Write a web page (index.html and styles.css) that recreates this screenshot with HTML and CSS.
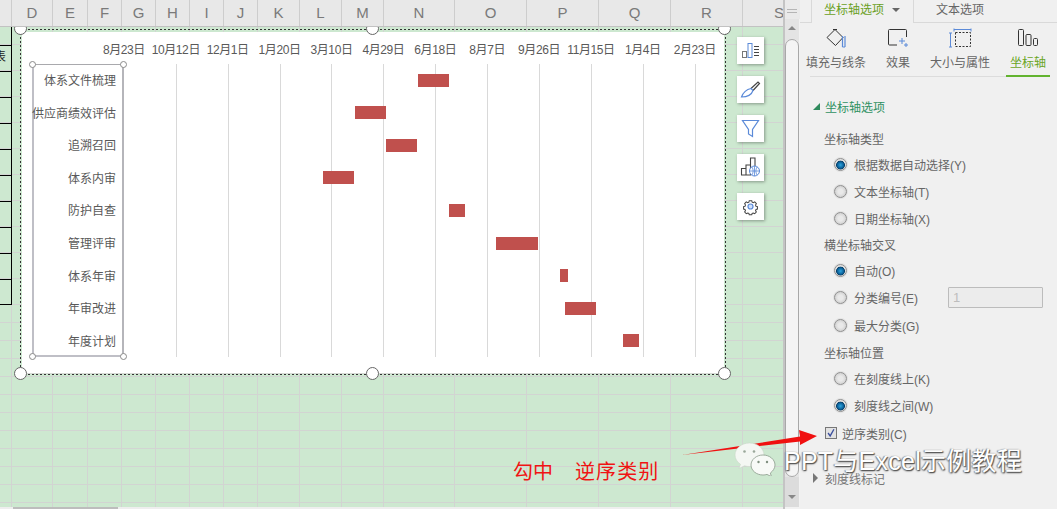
FILE: index.html
```html
<!DOCTYPE html>
<html lang="zh">
<head>
<meta charset="utf-8">
<title>甘特图 坐标轴选项</title>
<link rel="stylesheet" href="styles.css">
</head>
<body>
<div class="app">
  <section class="sheet">
    <div class="col-head cols">
      <span></span><span>D</span><span>E</span><span>F</span><span>G</span><span>H</span><span>I</span><span>J</span><span>K</span><span>L</span><span>M</span><span>N</span><span>O</span><span>P</span><span>Q</span><span>R</span><span class="col-s">S</span>
    </div>
    <div class="cells">
      <div class="v-lines cols">
        <i></i><i></i><i></i><i></i><i></i><i></i><i></i><i></i><i></i><i></i><i></i><i></i><i></i><i></i><i></i><i></i><i></i>
      </div>
      <div class="h-lines">
        <i></i><i class="tall"></i><i class="tall"></i><i class="tall"></i><i class="tall"></i><i class="tall"></i><i class="tall"></i><i class="tall"></i><i class="tall"></i><i class="tall"></i><i class="tall"></i>
        <i></i><i></i><i></i><i></i><i></i><i></i><i></i><i></i><i></i><i></i><i></i>
      </div>
      <div class="table-edge">
        <b class="first">表</b><b></b><b></b><b></b><b></b><b></b><b></b><b></b><b></b><b></b>
      </div>
    </div>
    <div class="hscroll"><i></i></div>

    <div class="chart">
      <div class="chart-body">
        <div class="x-axis">
          <span>8月23日</span><span>10月12日</span><span>12月1日</span><span>1月20日</span><span>3月10日</span><span>4月29日</span><span>6月18日</span><span>8月7日</span><span>9月26日</span><span>11月15日</span><span>1月4日</span><span>2月23日</span>
        </div>
        <div class="plot">
          <div class="cat-box">
            <span>体系文件梳理</span><span>供应商绩效评估</span><span>追溯召回</span><span>体系内审</span><span>防护自查</span><span>管理评审</span><span>体系年审</span><span>年审改进</span><span>年度计划</span>
            <i class="dot d-tl"></i><i class="dot d-tr"></i><i class="dot d-bl"></i><i class="dot d-br"></i>
          </div>
          <div class="bars">
            <div><i style="margin-left:294px;width:31px"></i></div>
            <div><i style="margin-left:231px;width:31px"></i></div>
            <div><i style="margin-left:262px;width:31px"></i></div>
            <div><i style="margin-left:199px;width:31px"></i></div>
            <div><i style="margin-left:325px;width:16px"></i></div>
            <div><i style="margin-left:372px;width:42px"></i></div>
            <div><i style="margin-left:436px;width:8px"></i></div>
            <div><i style="margin-left:441px;width:31px"></i></div>
            <div><i style="margin-left:499px;width:16px"></i></div>
          </div>
        </div>
      </div>
      <i class="handle h-tl"></i><i class="handle h-tc"></i><i class="handle h-tr"></i>
      <i class="handle h-bl"></i><i class="handle h-bc"></i><i class="handle h-br"></i>
    </div>

    <div class="tools">
      <button class="tool"><svg viewBox="0 0 27 27"><rect x="5.500" y="14.500" width="4" height="6" fill="none" stroke="#777"/><rect x="11" y="6.500" width="4" height="14" fill="none" stroke="#5b8ad8"/><path d="M17 9.500h5M17 12.500h5M17 15.500h5M17 18.500h5" stroke="#444"/></svg></button>
      <button class="tool"><svg viewBox="0 0 27 27"><path d="M14 12.500l7-6.500 1.500 1.500-6.500 7" fill="none" stroke="#444" stroke-width="1.200"/><path d="M14 12.500l2 2C14.500 19 9.500 21 4.500 21 6 17 9 13.500 14 12.500z" fill="none" stroke="#5b8ad8" stroke-width="1.200"/></svg></button>
      <button class="tool"><svg viewBox="0 0 27 27"><path d="M5.500 5.500h16l-6 9v7l-4-2.500v-4.500z" fill="none" stroke="#5b8ad8" stroke-width="1.200"/></svg></button>
      <button class="tool"><svg viewBox="0 0 27 27"><path d="M4.500 21v-6.500h4.500V21M9 21v-10h4.500V21M13.500 14V4h4.500v8M4 21h10" fill="none" stroke="#444" stroke-width="1.100"/><circle cx="17.500" cy="17" r="5" fill="#fff" stroke="#5b8ad8"/><path d="M12.500 17h10M17.500 12v10M15 13c1.500 2.500 1.500 5.500 0 8M20 13c-1.500 2.500-1.500 5.500 0 8" fill="none" stroke="#5b8ad8" stroke-width=".8"/></svg></button>
      <button class="tool"><svg viewBox="0 0 27 27"><path d="M11.500 5h4l.6 2.500 1.800.8 2.300-1.300 2.600 2.800-1.300 2.200.7 1.900 2.300.6v3.800l-2.300.7-.7 1.800 1.300 2.200-2.600 2.700-2.300-1.200-1.800.7-.6 2.300h-4l-.6-2.300-1.800-.7-2.300 1.200-2.600-2.700 1.300-2.200-.7-1.800-2.300-.7v-3.800l2.300-.6.700-1.900-1.300-2.200 2.600-2.800 2.300 1.300 1.800-.8z" transform="translate(5 4.500) scale(.63)" fill="none" stroke="#444" stroke-width="1.600"/><circle cx="13.500" cy="13.500" r="2.500" fill="#cfe0fa" stroke="#5b8ad8" stroke-width="1.200"/></svg></button>
    </div>

    <p class="note">勾中<span class="note-gap">逆序类别</span></p>
  </section>

  <div class="vscroll">
    <div class="grip"></div>
    <div class="track">
      <i class="arrow-up"></i>
      <div class="thumb"></div>
    </div>
    <div class="track-end"><i class="arrow-down"></i></div>
  </div>

  <aside class="panel">
    <div class="tabs">
      <div class="tab active">坐标轴选项<i class="caret"></i></div>
      <div class="tab">文本选项</div>
    </div>
    <div class="sub-tabs">
      <div class="sub w60">
        <svg viewBox="0 0 24 20"><path d="M11 1.500L19 9.500 11.500 17.500 3 9.500z" fill="none" stroke="#333"/><path d="M9 1.500h4" stroke="#333"/><path d="M18.500 8v11M21 8v11" stroke="#5b8ad8" stroke-width="1.200"/><path d="M18.500 19H21" stroke="#5b8ad8"/></svg>
        <span>填充与线条</span>
      </div>
      <div class="sub w24">
        <svg viewBox="0 0 24 20"><path d="M20.500 9V2.500a1 1 0 0 0-1-1H3.500a1 1 0 0 0-1 1V16a1 1 0 0 0 1 1H11" fill="none" stroke="#333"/><path d="M16 10v6M13 13h6M20 15v4M18 17h4" stroke="#5b8ad8"/></svg>
        <span>效果</span>
      </div>
      <div class="sub w60">
        <svg viewBox="0 0 24 20"><rect x="7.500" y="4.500" width="15" height="14" fill="none" stroke="#333" stroke-dasharray="2 1.500"/><path d="M6 1.500h17M6 .5v3M23 .5v3M2.500 5v14M1 5h3M1 19h3" fill="none" stroke="#5b8ad8"/></svg>
        <span>大小与属性</span>
      </div>
      <div class="sub on">
        <svg viewBox="0 0 24 20"><rect x="2.500" y="1.500" width="5" height="16" rx="1" fill="none" stroke="#333"/><rect x="10" y="6.500" width="5" height="11" rx="1" fill="none" stroke="#333"/><rect x="17.500" y="10.500" width="4" height="7" rx="1" fill="none" stroke="#333"/></svg>
        <span>坐标轴</span>
      </div>
    </div>

    <h2 class="section open"><i class="tri-open"></i>坐标轴选项</h2>

    <div class="options">
      <div class="head">坐标轴类型</div>
      <label class="opt"><i class="radio checked"></i>根据数据自动选择(Y)</label>
      <label class="opt"><i class="radio"></i>文本坐标轴(T)</label>
      <label class="opt"><i class="radio"></i>日期坐标轴(X)</label>
      <div class="head">横坐标轴交叉</div>
      <label class="opt"><i class="radio checked"></i>自动(O)</label>
      <label class="opt"><i class="radio"></i>分类编号(E)<span class="num">1</span></label>
      <label class="opt"><i class="radio"></i>最大分类(G)</label>
      <div class="head">坐标轴位置</div>
      <label class="opt"><i class="radio"></i>在刻度线上(K)</label>
      <label class="opt"><i class="radio checked"></i>刻度线之间(W)</label>
      <label class="check"><i class="box"><svg viewBox="0 0 12 12"><path d="M2.500 6l2.500 3.500L9.500 1.500" fill="none" stroke="#3b4f9e" stroke-width="1.600"/></svg></i>逆序类别(C)</label>
    </div>

    <h2 class="section closed"><i class="tri-closed"></i>刻度线标记</h2>
  </aside>

  <svg class="red-arrow" viewBox="0 0 140 30"><path d="M0 27L118 8.500 117 2 135 8 118 17 118 13.500z" fill="#f01010"/></svg>

  <svg class="wechat" viewBox="0 0 42 34"><path d="M15.500 1C7.500 1 1 6.500 1 13c0 3.800 2.200 7 5.500 9.300L5 26.500l5.500-2.700c1.600.5 3.300.7 5 .7 8 0 14.500-5 14.500-11.500S23.500 1 15.500 1z" fill="#f4f7f3" stroke="#c9d6c8" stroke-width=".6"/><path d="M29 13c-6.500 0-12 4.400-12 10s5.500 10 12 10c1.400 0 2.700-.2 4-.6l4.500 2.300-1.200-3.600C39 29 41 26.200 41 23c0-5.600-5.500-10-12-10z" fill="#f8faf7" stroke="#8a9a8a" stroke-width=".8"/><circle cx="10.500" cy="9.500" r="1.300" fill="#9aa89a"/><circle cx="20" cy="9.500" r="1.300" fill="#9aa89a"/><circle cx="24.500" cy="20" r="1.200" fill="#7f8f7f"/><circle cx="33" cy="20" r="1.200" fill="#7f8f7f"/></svg>
  <div class="watermark">PPT与Excel示例教程</div>
</div>
</body>
</html>
```

FILE: styles.css
```css
* { box-sizing: border-box; }
html, body { margin: 0; padding: 0; }
body {
  font-family: "Liberation Sans", "Noto Sans CJK SC", sans-serif;
  font-size: 12px;
  color: #666;
  overflow: hidden;
}
i { display: block; }

.app {
  position: relative;
  display: flex;
  width: 1057px;
  height: 509px;
  overflow: hidden;
  background: #f0f0f0;
}

/* ---------- spreadsheet ---------- */
.sheet {
  position: relative;
  width: 785px;
  height: 509px;
  display: flex;
  flex-direction: column;
  border-right: 2px solid #c4c4c4;
  overflow: hidden;
}
.cols {
  display: grid;
  grid-template-columns: 12px 41px 35px 34px 34px 34px 34px 34px 42px 42px 42px 71px 72px 72px 72px 72px 41px;
}
.col-head {
  position: relative;
  z-index: 3;
  flex: none;
  height: 27px;
  background: #e8e8e8;
  border-bottom: 1px solid #c2c2c2;
}
.col-head span {
  display: flex;
  align-items: center;
  justify-content: center;
  border-right: 1px solid #cdcdcd;
  padding-bottom: 1px;
  font-size: 15px;
  color: #7a7a7a;
}
.col-head .col-s {
  justify-content: flex-end;
  border-right: 0;
  overflow: hidden;
  white-space: nowrap;
  padding-right: 0;
}
.cells {
  flex: 1;
  display: grid;
  background: #cde8d0;
  overflow: hidden;
}
.cells > * { grid-area: 1 / 1; }
.v-lines i { border-right: 1px solid #d2d4d2; }
.h-lines { display: flex; flex-direction: column; }
.h-lines i { flex: none; height: 18px; border-bottom: 1px solid #d2d4d2; }
.h-lines .tall { height: 26px; }
.table-edge {
  width: 12px;
  height: 278px;
  padding-top: 18px;
  border-right: 1px solid #000;
  border-bottom: 1px solid #000;
  align-self: start;
}
.table-edge b {
  display: block;
  height: 26px;
  border-top: 1px solid #000;
  overflow: hidden;
  font-weight: 400;
  color: #222;
  line-height: 23px;
  text-indent: -6px;
}
.hscroll { flex: none; height: 2px; background: #eee; }
.hscroll i { width: 105px; height: 2px; margin-left: 13px; background: #bdbdbd; }

/* ---------- chart ---------- */
.chart {
  position: absolute;
  left: 20px;
  top: 29px;
  width: 706px;
  height: 346px;
  padding: 3px 2px 2px 2px;
  background:
    repeating-linear-gradient(90deg, #333 0 2px, transparent 2px 4px) left top / 100% 1px no-repeat,
    repeating-linear-gradient(90deg, #333 0 2px, transparent 2px 4px) left bottom / 100% 1px no-repeat,
    repeating-linear-gradient(0deg, #333 0 2px, transparent 2px 4px) left top / 1px 100% no-repeat,
    repeating-linear-gradient(0deg, #333 0 2px, transparent 2px 4px) right top / 1px 100% no-repeat;
}
.chart-body {
  height: 341px;
  background: #fff;
  color: #595959;
  box-shadow: 0 1px 0 #d5d8d4;
}
.x-axis {
  display: flex;
  height: 32px;
  padding-left: 76px;
  align-items: center;
}
.x-axis span {
  flex: none;
  width: 51.9px;
  text-align: center;
  white-space: nowrap;
  letter-spacing: -.4px;
}
.plot {
  display: flex;
  height: 293px;
  padding-left: 10px;
}
.cat-box {
  position: relative;
  flex: none;
  width: 92px;
  height: 293px;
  display: flex;
  flex-direction: column;
  align-items: flex-end;
  border: 2px solid #bfbfc6;
  border-top: 1px solid #a9a9ad;
  border-right-color: #b5b5ba;
  padding-right: 6px;
}
.cat-box span {
  flex: none;
  height: 32.6px;
  line-height: 32px;
  white-space: nowrap;
}
.dot {
  position: absolute;
  width: 7px;
  height: 7px;
  border: 1px solid #8a8a8a;
  border-radius: 50%;
  background: #fff;
}
.d-tl { left: -5px; top: -4px; }
.d-tr { right: -5px; top: -4px; }
.d-bl { left: -5px; bottom: -5px; }
.d-br { right: -5px; bottom: -5px; }
.bars {
  flex: 1;
  display: grid;
  grid-template-rows: repeat(9, 1fr);
  background:
    linear-gradient(#fff, #fff) left top / 1px 100% no-repeat,
    repeating-linear-gradient(90deg, #d9d9d9 0 1px, transparent 1px 51.87px);
}
.bars div { display: flex; align-items: center; }
.bars i { height: 13px; background: #c0504d; }

.handle {
  position: absolute;
  width: 13px;
  height: 13px;
  border: 1px solid #666;
  border-radius: 50%;
  background: #fff;
}
.h-tl { left: -6px; top: -7px; }
.h-tc { left: 346px; top: -7px; }
.h-tr { right: -5px; top: -7px; }
.h-bl { left: -6px; bottom: -5px; }
.h-bc { left: 346px; bottom: -5px; }
.h-br { right: -5px; bottom: -5px; }

/* ---------- floating chart tools ---------- */
.tools {
  position: absolute;
  left: 737px;
  top: 37px;
  display: flex;
  flex-direction: column;
  gap: 12px;
}
.tool {
  display: block;
  width: 27px;
  height: 27px;
  padding: 0;
  border: 0;
  background: #fff;
  box-shadow: 1px 1px 3px rgba(0, 0, 0, .35);
}
.tool svg { display: block; width: 27px; height: 27px; }

.note {
  position: absolute;
  left: 513px;
  top: 458px;
  margin: 0;
  font-size: 20px;
  line-height: 28px;
  color: #f01414;
  white-space: nowrap;
}
.note-gap { margin-left: 22px; letter-spacing: 1.100px; }

/* ---------- vertical scrollbar ---------- */
.vscroll {
  flex: none;
  width: 15px;
  height: 509px;
  display: flex;
  flex-direction: column;
  background: #f2f2f2;
}
.grip {
  flex: none;
  height: 19px;
  position: relative;
  background:
    linear-gradient(#b5b5b5, #b5b5b5) 2px 9px / 10px 1px no-repeat,
    linear-gradient(#b5b5b5, #b5b5b5) 2px 12px / 10px 1px no-repeat,
    #eaeaea;
}
.track {
  flex: none;
  height: 458px;
  width: 14px;
  background: #e4e4e4;
}
.arrow-up {
  width: 0;
  height: 0;
  margin: 7px auto 0;
  border-left: 4px solid transparent;
  border-right: 4px solid transparent;
  border-bottom: 4px solid #888;
}
.thumb {
  width: 14px;
  height: 438px;
  margin-top: 9px;
  background: #f4f4f4;
  border: 1px solid #a8a8a8;
  border-radius: 7px;
}
.track-end {
  flex: none;
  height: 30px;
  width: 14px;
  background: #dcdcdc;
  padding-top: 18px;
}
.arrow-down {
  width: 0;
  height: 0;
  margin: 0 auto;
  border-left: 4px solid transparent;
  border-right: 4px solid transparent;
  border-top: 4px solid #888;
}

/* ---------- task pane ---------- */
.panel {
  flex: none;
  width: 257px;
  height: 509px;
  background: #f0f0f0;
}
.tabs {
  display: flex;
  height: 23px;
  padding-left: 11px;
  border-bottom: 1px solid #d9d9d9;
}
.tab { line-height: 20px; padding-left: 22px; color: #666; }
.tab.active {
  display: flex;
  width: 103px;
  height: 23px;
  padding-left: 12px;
  color: #6a9f1e;
  background: #f0f0f0;
  border-left: 1px solid #d9d9d9;
  border-right: 1px solid #d9d9d9;
}
.caret {
  width: 0;
  height: 0;
  margin: 8px 0 0 8px;
  border-left: 4px solid transparent;
  border-right: 4px solid transparent;
  border-top: 4px solid #666;
}
.sub-tabs {
  display: flex;
  gap: 20px;
  width: 240px;
  height: 54px;
  margin-left: 10px;
  border-bottom: 1px solid #dcdcdc;
}
.sub {
  display: flex;
  flex-direction: column;
  align-items: center;
  height: 54px;
  padding-top: 5px;
  white-space: nowrap;
}
.sub svg { width: 24px; height: 20px; display: block; }
.sub span { margin-top: 6px; line-height: 18px; }
.w60 { width: 60px; }
.w24 { width: 24px; }
.w60:first-child { margin-left: -4px; }
.sub.on {
  width: 44px;
  margin-left: -4px;
  color: #6aa51f;
  border-bottom: 2px solid #62b32f;
}
.section {
  display: flex;
  align-items: center;
  height: 18px;
  margin: 0;
  font-size: 12px;
  font-weight: 400;
}
.section.open { margin-top: 20px; padding-left: 13px; color: #2f9162; }
.tri-open {
  width: 0;
  height: 0;
  margin-right: 5px;
  border-left: 7px solid transparent;
  border-bottom: 7px solid #2f8a5c;
}
.section.closed { margin-top: 22px; padding-left: 13px; color: #777; }
.tri-closed {
  width: 0;
  height: 0;
  margin-right: 7px;
  border-top: 5px solid transparent;
  border-bottom: 5px solid transparent;
  border-left: 5px solid #777;
}
.options {
  display: grid;
  grid-template-rows: 26px 27px 27px 27px 25px 27px 27px 28px 26px 26px 28px 28px;
  margin-top: 10px;
  padding-left: 24px;
}
.head, .opt, .check { display: flex; align-items: center; white-space: nowrap; }
.opt { padding-left: 10px; }
.radio {
  flex: none;
  width: 13px;
  height: 13px;
  margin-right: 7px;
  border: 1px solid #8f8f8f;
  border-radius: 50%;
  background: radial-gradient(circle, #e9e9e9 0 30%, #c6c6c6 95%);
  box-shadow: 0 0 0 1px #e2e2e2;
}
.radio.checked {
  background: radial-gradient(circle at 50% 55%, #2da6e0 0, #0a5d95 40%, #0a3f66 50%, #e0e0e0 58%);
}
.num {
  width: 95px;
  height: 21px;
  margin-left: 30px;
  padding-left: 4px;
  line-height: 19px;
  color: #bdbdbd;
  font-size: 13px;
  background: #ececec;
  border: 1px solid #bcbcbc;
  border-radius: 1px;
}
.check { padding-left: 1px; }
.box {
  flex: none;
  width: 12px;
  height: 12px;
  margin-right: 5px;
  border: 1px solid #777;
  background: #e2e2e2;
}
.box svg { display: block; width: 10px; height: 10px; }

/* ---------- overlays ---------- */
.red-arrow {
  position: absolute;
  left: 682px;
  top: 428px;
  width: 140px;
  height: 30px;
}
.wechat {
  position: absolute;
  left: 734px;
  top: 442px;
  width: 42px;
  height: 34px;
}
.watermark {
  position: absolute;
  left: 784px;
  top: 444px;
  font-size: 25px;
  line-height: 34px;
  letter-spacing: .25px;
  color: #fff;
  white-space: nowrap;
  text-shadow: 1px 1px 1px #555, -1px 0 1px #888, 0 1px 2px #666;
}
```
